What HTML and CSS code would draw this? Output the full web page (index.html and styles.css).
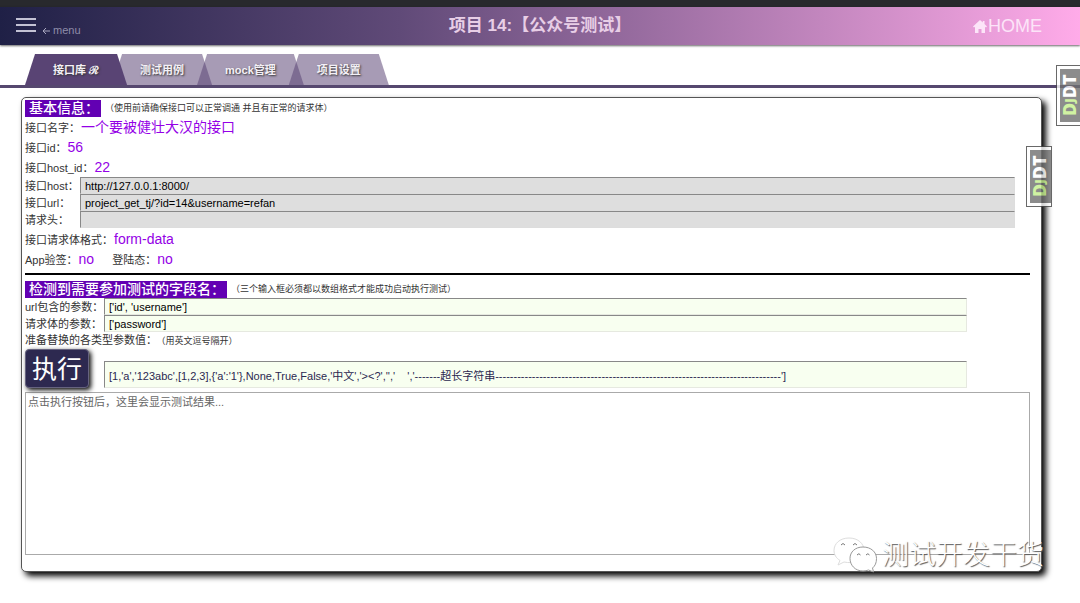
FILE: index.html
```
<!DOCTYPE html>
<html lang="zh-CN">
<head>
<meta charset="utf-8">
<title>项目 14:【公众号测试】</title>
<link rel="stylesheet" href="styles.css">
</head>
<body>
<div class="window-strip"></div>
<header class="header">
  <button class="menu-button" type="button">
    <svg class="menu-bars" viewBox="0 0 20 14" aria-hidden="true"><path d="M0 1h20M0 7h20M0 13h20"/></svg>
    <svg class="menu-arrow" viewBox="0 0 8 8" aria-hidden="true"><path d="M8 4H1M4 1L1 4l3 3"/></svg>
    <span class="menu-text">menu</span>
  </button>
  <h1 class="title">项目 14:【公众号测试】</h1>
  <a class="home" href="#home">
    <svg class="home-icon" viewBox="0 0 14 13" aria-hidden="true"><path d="M7 0L0 6.500l1 1L2 6.700V13h3.500V9h3v4H12V6.700l1 .800 1-1-2.500-2.400V1H9.800v1.600z"/></svg>HOME</a>
</header>
<nav class="tabs">
  <a class="tab tab-active" href="#api">接口库 ℛ</a>
  <a class="tab" href="#cases">测试用例</a>
  <a class="tab" href="#mock">mock管理</a>
  <a class="tab" href="#settings">项目设置</a>
</nav>
<main class="panel">
  <section>
    <div class="heading-row"><h2 class="heading">基本信息：</h2><small class="note">（使用前请确保接口可以正常调通 并且有正常的请求体）</small></div>
    <div class="row">接口名字：<span class="value">一个要被健壮大汉的接口</span></div>
    <div class="row">接口id：<span class="value">56</span></div>
    <div class="row">接口host_id：<span class="value">22</span></div>
    <div class="field-row"><label class="label" for="host">接口host：</label><input class="input" id="host" value="http://127.0.0.1:8000/" readonly></div>
    <div class="field-row"><label class="label" for="url">接口url：</label><input class="input" id="url" value="project_get_tj/?id=14&amp;username=refan" readonly></div>
    <div class="field-row"><label class="label" for="head">请求头：</label><input class="input" id="head" value="" readonly></div>
    <div class="row row-format">接口请求体格式：<span class="value">form-data</span></div>
    <div class="row">App验签：<span class="value">no</span><span class="login">登陆态：<span class="value">no</span></span></div>
  </section>
  <hr class="rule">
  <section>
    <div class="heading-row"><h2 class="heading">检测到需要参加测试的字段名：</h2><small class="note">（三个输入框必须都以数组格式才能成功启动执行测试）</small></div>
    <div class="field-row field-green"><label class="label label-wide" for="url-params">url包含的参数：</label><input class="input input-green" id="url-params" value="['id', 'username']"></div>
    <div class="field-row field-green"><label class="label label-wide" for="body-params">请求体的参数：</label><input class="input input-green" id="body-params" value="['password']"></div>
    <label class="replace-label" for="values">准备替换的各类型参数值：<small class="note">（用英文逗号隔开）</small></label>
    <div class="field-row field-green run-row">
      <div class="label-wide"><button class="run" type="button">执行</button></div>
      <input class="input input-green input-tall" id="values" value="[1,'a','123abc',[1,2,3],{'a':'1'},None,True,False,'中文','&gt;&lt;?','','&nbsp;&nbsp;&nbsp;&nbsp;','-------超长字符串------------------------------------------------------------------------------']">
    </div>
  </section>
  <textarea class="result" aria-label="测试结果" placeholder="点击执行按钮后，这里会显示测试结果..."></textarea>
</main>
<button class="debug debug-edge" type="button"><span class="debug-face"><span class="debug-green">D<small class="debug-j">J</small></span>DT</span></button>
<button class="debug debug-panel" type="button"><span class="debug-face"><span class="debug-green">D<small class="debug-j">J</small></span>DT</span></button>
<div class="watermark">
  <svg class="watermark-icon" viewBox="0 0 44 36" aria-hidden="true">
    <path class="bubble" d="M16 1C7 1 1 6.500 1 13.500c0 4 2 7.500 6 10L5 28l6-3c9 2 20-1 20-11.500C31 6.500 25 1 16 1z"/>
    <path class="bubble bubble-front" d="M30 10c-8 0-13 5-13 11.500S22 34 30 34c2 0 4-.500 5.500-1l5 2-1-4c2.500-2 4-5 4-9.500C43.500 15 38 10 30 10z"/>
    <path class="eye" d="M8 8q2-3 4 0M20 8q2-3 4 0M24 18q2-2.500 3.500 0M33 18q2-2.500 3.500 0"/>
  </svg>
  <span>测试开发干货</span>
</div>
</body>
</html>
```
FILE: styles.css
```
* { box-sizing: border-box; }

body {
  margin: 0;
  position: relative;
  min-height: 100vh;
  overflow-x: hidden;
  background: #fff;
  color: #333;
  font: 11px/16px "Liberation Sans", "Noto Sans CJK SC", sans-serif;
}

button, input, textarea { font-family: inherit; }

.window-strip { height: 7px; background: #28292d; }

.header {
  display: grid;
  grid-template-columns: 1fr auto 1fr;
  align-items: center;
  height: 38px;
  padding: 0 38px 0 16px;
  background: linear-gradient(90deg, #1f2046 0%, #604a78 37%, #ffabe9 100%);
  box-shadow: 0 1px 2px rgba(0, 0, 0, .6);
}

.menu-button {
  display: flex;
  align-items: flex-end;
  gap: 6px;
  justify-self: start;
  padding: 0;
  border: 0;
  background: none;
  color: #8f8da9;
}
.menu-bars { width: 20px; height: 14px; margin-bottom: 3px; fill: none; stroke: #c3c2d4; stroke-width: 2; }
.menu-arrow { width: 8px; height: 8px; fill: none; stroke: #aaa8c0; stroke-width: 1; }
.menu-text { margin-left: -3px; font-size: 11px; line-height: 10px; }

.title {
  margin: 0 0 0 22px;
  color: #e8cee6;
  font-size: 17px;
  line-height: 24px;
  font-weight: 700;
}

.home {
  display: flex;
  align-items: center;
  gap: 1px;
  justify-self: end;
  color: #fce4f8;
  font-size: 18px;
  text-decoration: none;
}
.home-icon { width: 14px; height: 13px; fill: #fce4f8; }

.tabs {
  display: flex;
  align-items: flex-end;
  height: 43px;
  padding-left: 25px;
  border-bottom: 3px solid #56486f;
}
.tab {
  height: 31px;
  margin-right: -15px;
  padding: 0 28px;
  background: rgba(88, 67, 116, .53);
  clip-path: polygon(10px 0, calc(100% - 10px) 0, 100% 100%, 0 100%);
  color: #f4f0f6;
  font-size: 11px;
  line-height: 32px;
  font-weight: 700;
  text-decoration: none;
  text-shadow: 1px 1px 2px #333;
}
.tab-active { position: relative; z-index: 1; background: #594474; }

.panel {
  margin: 9px 38px 30px 21px;
  padding: 1px 11px 16px 3px;
  border: 1px solid #555;
  border-radius: 5px;
  background: #fff;
  box-shadow: 4px 4px 6px #000;
}

.heading-row { display: flex; align-items: center; height: 18px; }
.heading {
  margin: 0;
  padding: 0 2px 0 4px;
  background: #6200b3;
  color: #fff;
  font-size: 14px;
  line-height: 17px;
  font-weight: 500;
}
.note { margin-left: 4px; font-size: 9px; }

.row { height: 20px; line-height: 20px; }
.value { margin-left: 1px; color: #9400e6; font-size: 14px; }
.row-format { margin-top: 1px; }
.login { margin-left: 18px; }

.field-row { display: flex; align-items: center; margin-right: 15px; }
.field-green { margin-right: 63px; }
.label { flex: none; width: 55px; }
.label-wide { flex: none; width: 79px; }
.input {
  flex: 1;
  min-width: 0;
  height: 17px;
  padding: 0 4px;
  border: 1px solid;
  border-color: #888 #ddd #ddd #888;
  background: #dedede;
  color: #000;
  font-size: 11px;
}
.input-green { border-color: #888 #e6e9e0 #e6e9e0 #888; background: #f8fff0; }
.input-tall { height: 27px; color: #2b2850; }

.rule { margin: 4px 0 5px; border: 0; border-top: 2px solid #000; }

.replace-label { display: block; height: 17px; line-height: 17px; }
.run-row { align-items: flex-end; height: 39px; }
.run {
  display: block;
  width: 64px;
  height: 39px;
  padding: 0;
  border: 1px solid #66637f;
  border-radius: 4px;
  background: #2d2950;
  box-shadow: 2px 2px 5px #000;
  color: #fff;
  font-size: 25px;
  line-height: 36px;
}

.result {
  display: block;
  width: 100%;
  height: 163px;
  margin-top: 4px;
  padding: 1px 2px;
  border: 1px solid #aaa;
  background: #fff;
  font-size: 11px;
  line-height: 16px;
  resize: none;
}
.result::placeholder { color: #666; }

/* Floating debug handles */
.debug {
  position: absolute;
  height: 61px;
  padding: 3px;
  border: 1px solid #444;
  background: #fff;
  opacity: .8;
}
.debug-edge { top: 65px; right: -6px; width: 30px; }
.debug-panel { top: 146px; right: 28px; width: 26px; padding-right: 0; }
.debug-face {
  display: block;
  width: 100%;
  height: 53px;
  background: #707070;
  color: #fff;
  font: 800 18px/18px "Open Sans", sans-serif;
  text-align: center;
  writing-mode: vertical-rl;
  transform: rotate(180deg);
}
.debug-green { color: #c5f08c; }
.debug-j { font-size: 13px; }

.watermark {
  position: absolute;
  right: 36px;
  bottom: 30px;
  display: flex;
  align-items: center;
  gap: 5px;
  color: #fff;
  font-size: 27px;
  line-height: 36px;
  font-weight: 300;
  text-shadow: 1px 1px 1px #555;
}
.watermark-icon { width: 44px; height: 36px; }
.bubble { fill: #fff; stroke: #ddd; stroke-width: 1; }
.bubble-front { stroke: #999; }
.eye { fill: none; stroke: #777; stroke-width: 1; }
```
